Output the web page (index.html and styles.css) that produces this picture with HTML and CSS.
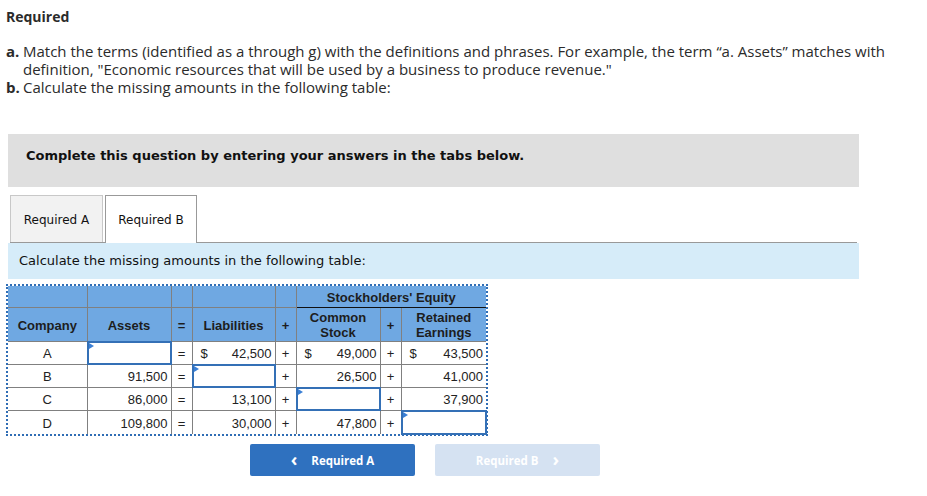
FILE: index.html
```html
<!DOCTYPE html>
<html>
<head>
<meta charset="utf-8">
<link rel="stylesheet" href="styles.css">
</head>
<body>
<div class="page">
  <div class="req-title">Required</div>
  <ol class="req-list">
    <li><span class="lbl">a.</span><span class="txt">Match the terms (identified as a through g) with the definitions and phrases. For example, the term “a. Assets” matches with definition, "Economic resources that will be used by a business to produce revenue."</span></li>
    <li><span class="lbl">b.</span><span class="txt">Calculate the missing amounts in the following table:</span></li>
  </ol>

  <div class="instr">Complete this question by entering your answers in the tabs below.</div>

  <div class="tabs">
    <div class="tab">Required A</div>
    <div class="tab active">Required B</div>
  </div>
  <div class="tab-intro">Calculate the missing amounts in the following table:</div>

  <div class="tbl-wrap">
    <table class="tbl">
      <colgroup>
        <col class="c-co"><col class="c-num"><col class="c-op"><col class="c-num2"><col class="c-op"><col class="c-num"><col class="c-op"><col class="c-num3">
      </colgroup>
      <thead>
        <tr class="h1">
          <th></th><th></th><th></th><th></th><th></th>
          <th colspan="3" class="se">Stockholders' Equity</th>
        </tr>
        <tr class="h2">
          <th>Company</th><th>Assets</th><th>=</th><th>Liabilities</th><th>+</th>
          <th>Common<br>Stock</th><th>+</th><th>Retained<br>Earnings</th>
        </tr>
      </thead>
      <tbody>
        <tr>
          <td class="ctr">A</td>
          <td class="inp"><div class="box"></div><span class="flag"></span></td>
          <td class="ctr">=</td>
          <td class="num"><span class="dol">$</span>42,500</td>
          <td class="ctr">+</td>
          <td class="num"><span class="dol">$</span>49,000</td>
          <td class="ctr">+</td>
          <td class="num"><span class="dol">$</span>43,500</td>
        </tr>
        <tr>
          <td class="ctr">B</td>
          <td class="num">91,500</td>
          <td class="ctr">=</td>
          <td class="inp"><div class="box"></div><span class="flag"></span></td>
          <td class="ctr">+</td>
          <td class="num">26,500</td>
          <td class="ctr">+</td>
          <td class="num">41,000</td>
        </tr>
        <tr>
          <td class="ctr">C</td>
          <td class="num">86,000</td>
          <td class="ctr">=</td>
          <td class="num">13,100</td>
          <td class="ctr">+</td>
          <td class="inp"><div class="box"></div><span class="flag"></span></td>
          <td class="ctr">+</td>
          <td class="num">37,900</td>
        </tr>
        <tr>
          <td class="ctr">D</td>
          <td class="num">109,800</td>
          <td class="ctr">=</td>
          <td class="num">30,000</td>
          <td class="ctr">+</td>
          <td class="num">47,800</td>
          <td class="ctr">+</td>
          <td class="inp"><div class="box"></div><span class="flag"></span></td>
        </tr>
      </tbody>
    </table>
  </div>

  <div class="nav">
    <div class="btn prev"><span class="chev">&lsaquo;</span>Required A</div>
    <div class="btn next">Required B<span class="chev">&rsaquo;</span></div>
  </div>
</div>
</body>
</html>
```
FILE: styles.css
```css
html, body {
  margin: 0;
  padding: 0;
  background: #fff;
}
.page {
  padding: 8px 0 0 6px;
  color: #2b2b2b;
  font-family: "Open Sans", "Liberation Sans", sans-serif;
}
.req-title {
  font-size: 14px;
  font-weight: 700;
  line-height: 18px;
}
.req-list {
  list-style: none;
  margin: 16px 0 0;
  padding: 0;
  font-size: 15px;
  line-height: 18px;
}
.req-list li {
  display: flex;
}
.req-list .lbl {
  flex: 0 0 17px;
  font-weight: 700;
}
.req-list .txt {
  flex: 1;
  padding-right: 30px;
}
.instr {
  margin: 38px 0 0 2px;
  width: 851px;
  height: 53px;
  box-sizing: border-box;
  background: #dfdfdf;
  padding: 14px 0 0 18px;
  font-family: "DejaVu Sans", Verdana, sans-serif;
  font-size: 13px;
  font-weight: 700;
  color: #111;
}
.tabs {
  display: flex;
  gap: 2px;
  margin: 8px 0 0 4px;
  width: 847px;
  border-bottom: 1px solid #999;
  height: 47px;
}
.tab {
  box-sizing: border-box;
  height: 47px;
  width: 93px;
  border: 1px solid #c8c8c8;
  border-bottom: none;
  background: #f2f2f2;
  font-family: "DejaVu Sans", Verdana, sans-serif;
  font-size: 12px;
  color: #111;
  display: flex;
  align-items: center;
  justify-content: center;
  padding-top: 1px;
}
.tab.active {
  width: 92px;
  height: 48px;
  background: #fff;
  border-color: #999;
}
.tab-intro {
  margin-left: 2px;
  width: 851px;
  height: 36px;
  box-sizing: border-box;
  background: #d6ecf9;
  padding: 10px 0 0 11px;
  font-family: "DejaVu Sans", Verdana, sans-serif;
  font-size: 13px;
  color: #111;
}
.tbl-wrap {
  margin-top: 5px;
  width: 478px;
  border: 2px dotted #2f6db5;
}
.tbl {
  width: 478px;
  border-collapse: collapse;
  border-style: hidden;
  table-layout: fixed;
  font-family: "Liberation Sans", Arial, sans-serif;
  font-size: 13px;
  color: #222;
}
.c-co { width: 79px; }
.c-num { width: 84px; }
.c-num2 { width: 83px; }
.c-num3 { width: 85px; }
.c-op { width: 21px; }
.tbl th, .tbl td {
  border: 1px solid #808080;
  padding: 0;
}
.tbl th {
  background: #6fa8e2;
  font-size: 13px;
  font-weight: 700;
  line-height: 15px;
  color: #1d1d1d;
}
.tbl .h1 th {
  height: 20px;
  padding-top: 1px;
}
.tbl .h1 th.se {
  border-bottom: 1px solid #111;
}
.tbl .h2 th {
  height: 32px;
  padding-top: 1px;
}
.tbl td {
  height: 21px;
  line-height: 15px;
  background: #fff;
  padding-top: 1px;
}
.tbl tbody tr:last-child td {
  height: 22px;
}
.tbl td.ctr {
  text-align: center;
}
.tbl td.num {
  text-align: right;
  padding-right: 3px;
}
.tbl td .dol {
  float: left;
  padding-left: 8px;
}
.tbl td.inp {
  position: relative;
}
.box {
  position: absolute;
  top: -1px;
  left: -1px;
  right: -1px;
  bottom: -1px;
  border: 2px solid #3470b6;
  background: #fff;
}
.flag {
  position: absolute;
  left: 1px;
  top: 1px;
  width: 0;
  height: 0;
  border-top: 3px solid transparent;
  border-bottom: 3px solid transparent;
  border-left: 5px solid #3a7fd5;
}
.nav {
  display: flex;
  gap: 20px;
  margin: 8px 0 0 244px;
}
.btn {
  width: 165px;
  height: 32px;
  border-radius: 2px;
  display: flex;
  align-items: center;
  justify-content: center;
  color: #fff;
  font-family: "Open Sans", "Liberation Sans", sans-serif;
  font-size: 11.5px;
  font-weight: 700;
}
.btn.prev {
  background: #2f71bf;
}
.btn.next {
  background: #d5e2f2;
}
.chev {
  font-size: 18px;
  font-weight: 700;
  line-height: 1;
  margin-top: -3px;
}
.prev .chev { margin-right: 14px; }
.next .chev { margin-left: 14px; }
```
